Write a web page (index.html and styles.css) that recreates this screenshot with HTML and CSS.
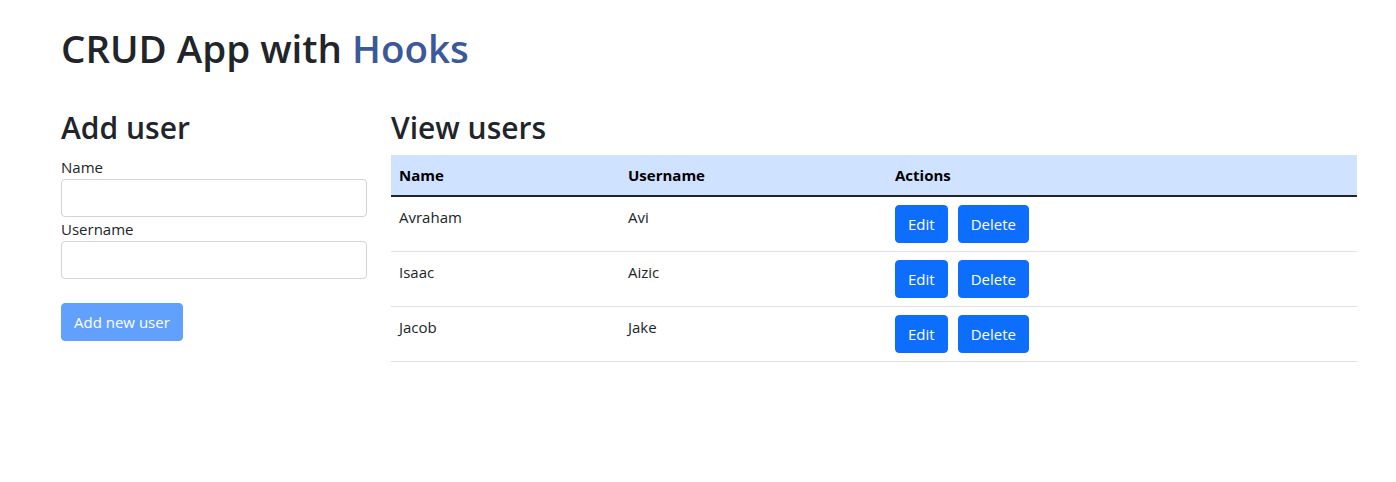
FILE: index.html
```html
<!DOCTYPE html>
<html lang="en">
<head>
<meta charset="utf-8">
<title>CRUD App with Hooks</title>
<link rel="stylesheet" href="styles.css">
</head>
<body>
<div class="container">
  <h1 class="title">CRUD App with <span class="accent">Hooks</span></h1>
  <div class="row">
    <div class="col-left">
      <h2 class="section-title">Add user</h2>
      <form class="user-form">
        <label class="form-label">Name</label>
        <input class="form-control" type="text" name="name">
        <label class="form-label">Username</label>
        <input class="form-control" type="text" name="username">
        <button class="btn btn-primary btn-disabled" type="button" disabled>Add new user</button>
      </form>
    </div>
    <div class="col-right">
      <h2 class="section-title">View users</h2>
      <table class="table">
        <thead>
          <tr>
            <th class="c-name">Name</th>
            <th class="c-user">Username</th>
            <th class="c-act">Actions</th>
          </tr>
        </thead>
        <tbody>
          <tr>
            <td>Avraham</td>
            <td>Avi</td>
            <td><div class="actions"><button class="btn btn-primary">Edit</button><button class="btn btn-primary">Delete</button></div></td>
          </tr>
          <tr>
            <td>Isaac</td>
            <td>Aizic</td>
            <td><div class="actions"><button class="btn btn-primary">Edit</button><button class="btn btn-primary">Delete</button></div></td>
          </tr>
          <tr>
            <td>Jacob</td>
            <td>Jake</td>
            <td><div class="actions"><button class="btn btn-primary">Edit</button><button class="btn btn-primary">Delete</button></div></td>
          </tr>
        </tbody>
      </table>
    </div>
  </div>
</div>
</body>
</html>
```

FILE: styles.css
```css
* { box-sizing: border-box; }
html, body { margin: 0; padding: 0; background: #fff; }
body {
  font-family: "Open Sans", "Noto Sans", "Liberation Sans", sans-serif;
  font-size: 15px;
  line-height: 24px;
  color: #212529;
}
.container {
  margin-left: 61px;
  width: 1296px;
  padding-top: 24px;
}
.title {
  margin: 0 0 37px 0;
  font-size: 38.5px;
  line-height: 48px;
  font-weight: 600;
  color: #212529;
}
.accent { color: #3b5998; }
.row {
  display: flex;
  gap: 24px;
  align-items: flex-start;
}
.col-left { width: 306px; flex: none; }
.col-right { flex: 1; }
.section-title {
  margin: 0 0 8px 0;
  font-size: 30px;
  line-height: 38px;
  font-weight: 600;
}
.user-form { display: flex; flex-direction: column; align-items: flex-start; }
.form-label { display: block; line-height: 24px; }
.form-control {
  display: block;
  width: 100%;
  height: 38px;
  border: 1px solid #ced4da;
  border-radius: 4px;
  padding: 6px 12px;
  font: inherit;
  background: #fff;
}
.btn {
  display: inline-block;
  height: 38px;
  padding: 6px 12px;
  border: 1px solid #0d6efd;
  border-radius: 4px;
  font: inherit;
  line-height: 24px;
  color: #fff;
  background: #0d6efd;
  cursor: pointer;
}
.btn-disabled { opacity: 0.65; margin-top: 24px; }
.table {
  width: 100%;
  border-collapse: collapse;
}
.table th, .table td {
  padding: 8px;
  text-align: left;
  vertical-align: top;
  border-bottom: 1px solid #dee2e6;
}
.table thead th {
  background: #cfe2ff;
  color: #000;
  font-weight: 700;
  border-bottom: 2px solid #212529;
}
.c-name { width: 229px; }
.c-user { width: 267px; }
.actions { display: flex; gap: 10px; }
```
